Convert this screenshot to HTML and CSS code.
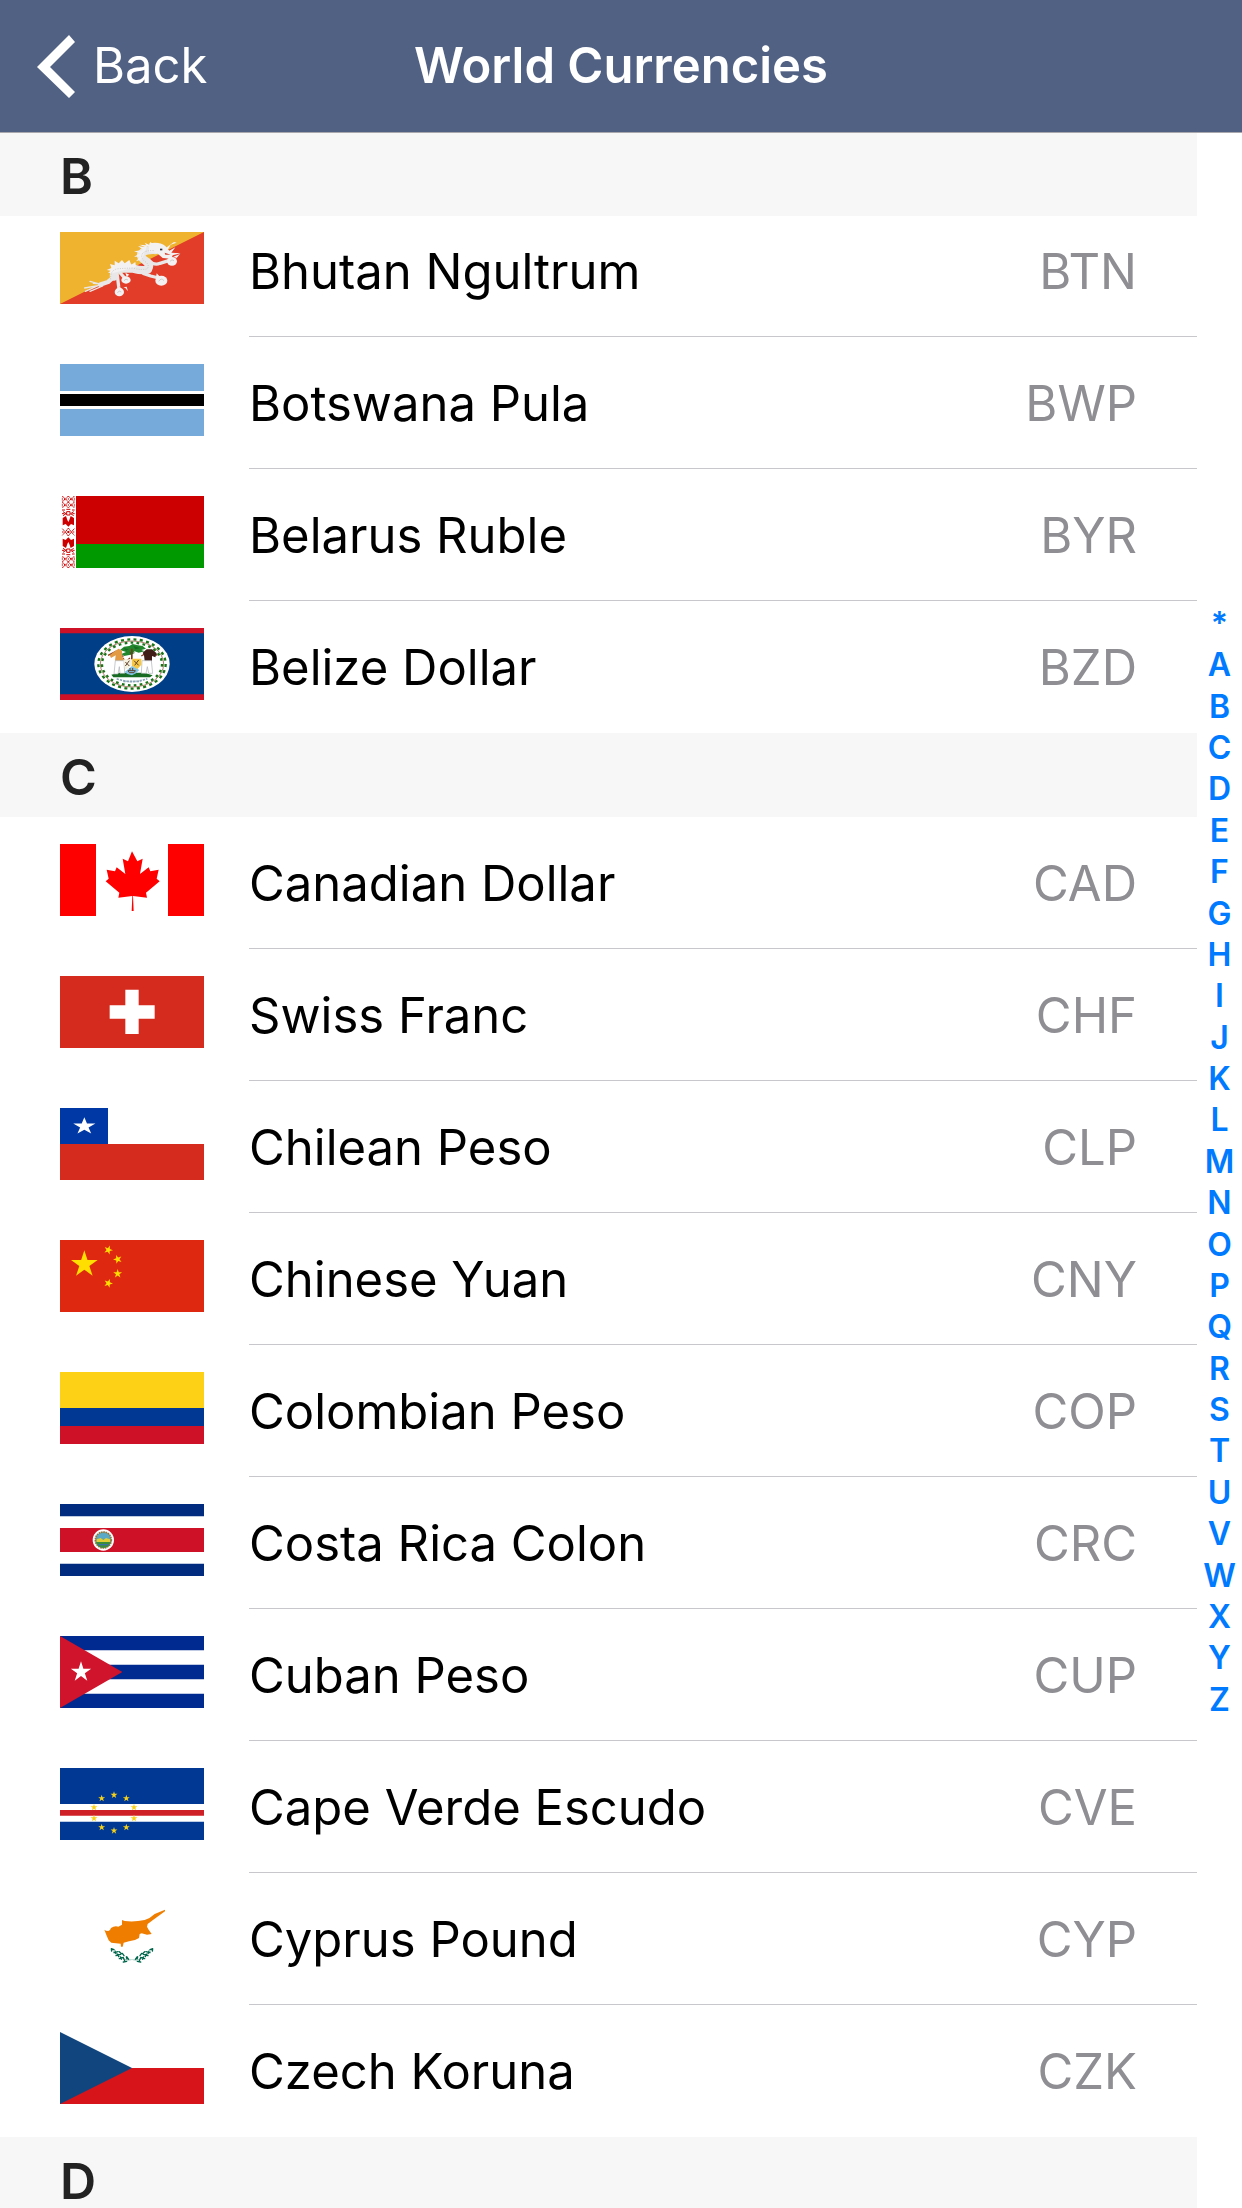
FILE: index.html
```html
<!DOCTYPE html>
<html lang="en">
<head>
<meta charset="utf-8">
<meta name="viewport" content="width=device-width, initial-scale=1">
<title>World Currencies</title>
<link rel="stylesheet" href="styles.css">
</head>
<body>
<svg class="defs" aria-hidden="true">
  <defs>
    <path id="star" d="M0-100 22.5-31H95L36 12 59 81 0 38-59 81-36 12-95-31H-22.5Z"/>
    <g id="diamonds" fill="none" stroke="#c00" stroke-width="3">
      <path d="M7 0l8 9-8 9 8 9-8 9M43 0l-8 9 8 9-8 9 8 9M25 0l-8 9 8 9-8 9 8 9M25 0l8 9-8 9 8 9-8 9" stroke-dasharray="5 1"/>
      <path d="M7 5v9M7 23v9M43 5v9M43 23v9M15 5v8M15 23v8M35 5v8M35 23v8M25 6v6M25 24v6" stroke-width="2"/>
      <path d="M6 42h9M19 40h12M36 42h8M9 47l9 6-9 6M41 47l-9 6 9 6M6 53h7M37 53h7M20 47h10v10h-10Z"/>
    </g>
    <g id="olive" fill="none" stroke="#00664b" stroke-width="4" stroke-linecap="round">
      <path d="M154 146l8 3M155 153l-1-5M162 158l12-3M168 161l-3-8M168 167l14-4M176 170l-3-8M178 176l12-4M184 178l-2-7M190 186l10-2M194 182l-4-9M201 177l-2-6M206 178l-6-8M184 161l-6-6M192 167l-5-7"/>
      <path d="M155 147q15 24 48 34l11-2" stroke-width="1"/>
    </g>
  </defs>
</svg>

<header class="navbar">
  <button class="back" type="button">
    <svg class="chevron" viewBox="0 0 38 63" aria-hidden="true"><path d="M32 0l6 7-25 25 25 25-6 6L0 32Z" fill="#fff"/></svg>
    <span>Back</span>
  </button>
  <h1 class="title">World Currencies</h1>
</header>

<main class="content">
  <div class="list">
    <section id="B">
      <h2 class="letter letter-pinned">B</h2>
      <ul class="rows rows-scrolled">
        <li class="row">
          <svg class="flag" viewBox="0 0 432 216" aria-hidden="true">
            <path fill="#efb32f" d="M0 0h432v216H0Z"/><path fill="#e23d28" d="M432 0v216H0Z"/>
            <g fill="none" stroke="#e9e7e7" stroke-linecap="round" stroke-linejoin="round">
              <path stroke-width="4" d="M76 178l40-18M74 168l44-8M90 178l38-16M90 148l36 10M100 154l28 2"/>
              <path stroke-width="13" d="M120 158l24-8 16-14"/>
              <path stroke-width="25" d="M162 134q-2-22 18-24l40 0q30 8 44 2 8-14-6-24-18-12-14-22 10-14 44-12"/>
              <path stroke-width="10" d="M172 130l4 34 2 12M178 120l16 18M250 124l22 8 24 6M266 84q16 18 34 10l26-8"/>
            </g>
            <g fill="#f3f1f1">
              <ellipse cx="178" cy="180" rx="14" ry="13"/><ellipse cx="198" cy="144" rx="14" ry="11"/>
              <ellipse cx="304" cy="146" rx="18" ry="15"/><ellipse cx="336" cy="88" rx="15" ry="13"/>
              <path d="M262 40l-24-2 18 8-22-4 16 12-28 4 18 6-18 10 18 0-12 14 18-6M158 124l-14-2 8-6-12-2 14-6-4-12 14 4 0-14 12 8 10-10 8 10 14-10 6 14 12-8 2 14"/>
              <path d="M268 34q30-6 48 8l12 14 18-10-12 16 28 2-24 6-4 10-26-2-16-14-26-4ZM320 46l22-16 8 2-18 6-10 18ZM260 42l-6-10 16 8 0-10 14 8 8-6 6 12M340 74l20-8-10 12M190 166l10-2 4 14-8-10ZM200 134l-4-12 12 6M288 136l2-12 10 10"/>
            </g>
            <g fill="none" stroke="#bcb8b8" stroke-width="2">
              <path d="M152 142q-2-28 22-32l44-2q28 8 44 2 8-12-8-22-14-12-6-24 10-10 34-8" stroke-dasharray="3 4"/>
              <path d="M172 182q6-8 12-2M192 146q6-8 12-2M296 148q8-12 16-2M330 88q6-8 12-2"/>
            </g>
            <path fill="#333" d="M300 50h7v5h-7Z"/><path fill="#d7402f" d="M314 62l18 6-16 0Z"/>
          </svg>
          <div class="cell"><span class="name">Bhutan Ngultrum</span><span class="code">BTN</span></div>
        </li>
        <li class="row">
          <svg class="flag" viewBox="0 0 432 216" aria-hidden="true">
            <path fill="#75aadb" d="M0 0h432v216H0Z"/><path fill="#fff" d="M0 81h432v54H0Z"/><path d="M0 90h432v36H0Z"/>
          </svg>
          <div class="cell"><span class="name">Botswana Pula</span><span class="code">BWP</span></div>
        </li>
        <li class="row">
          <svg class="flag" viewBox="0 0 432 216" aria-hidden="true">
            <path fill="#fff" d="M0 0h48v216H0Z"/><path fill="#c00" d="M48 0h384v144H48Z"/><path fill="#090" d="M48 144h384v72H48Z"/>
            <use href="#diamonds"/>
            <use href="#diamonds" transform="translate(0 216) scale(1 -1)"/>
            <path fill="none" stroke="#c00" stroke-width="3" stroke-dasharray="5 1" d="M7 98l9 10-9 10M43 98l-9 10 9 10M25 96l9 12-9 12-9-12ZM6 108h6M38 108h6"/>
            <path fill="#c00" d="M8 66l10-6 4 12 3 6 3-6 4-12 10 6v22l-9-4-8 8-8-8-9 4ZM8 150l10 6 4-12 3-6 3 6 4 12 10-6v-22l-9 4-8-8-8 8-9-4ZM22 105h6v6h-6Z"/>
          </svg>
          <div class="cell"><span class="name">Belarus Ruble</span><span class="code">BYR</span></div>
        </li>
        <li class="row">
          <svg class="flag" viewBox="0 0 432 216" aria-hidden="true">
            <path fill="#ce1126" d="M0 0h432v216H0Z"/><path fill="#003f87" d="M0 16h432v183H0Z"/>
            <ellipse cx="216" cy="108" rx="113" ry="84" fill="#fff"/>
            <g fill="none" stroke="#177517">
              <ellipse cx="216" cy="108" rx="95" ry="69" stroke-width="2" stroke="#8a3d22"/>
              <ellipse cx="216" cy="108" rx="101" ry="74" stroke-width="7" stroke-dasharray="9 10"/>
              <ellipse cx="216" cy="108" rx="90" ry="64" stroke-width="7" stroke-dasharray="8 10"/>
            </g>
            <path fill="#23852c" d="M180 66l12-10 16-2 10-6 16 4 14 2 10 8-14 4 10 4-18 4-12-4-12 10-20 4-8-6 14-6Z"/>
            <path fill="#176b22" d="M190 60l16 4-8 4ZM220 54l20 6-14 4ZM208 72l18 2-14 6ZM154 140l26-6h72l26 8-8 6h-110Z"/>
            <path fill="#753d18" d="M213 62h5v40h-5Z"/>
            <path fill="none" stroke="#8a3d22" stroke-width="4" d="M144 82l24-12 22 16M244 84l26-16 22 14M188 90l20 24M210 90l-24 20"/>
            <path fill="#e39b43" d="M166 68l10-6 10 6v14l6 16h-27l2-16-14 8-4-8Z"/>
            <path fill="#401d16" d="M248 74l12-10h16l14 12-4 12-10-4v14h-22l-2-16Z"/>
            <path fill="#fff" stroke="#aab0b4" stroke-width="2" d="M166 98h26l2 38h-14l-2-20-4 22h-12ZM246 98h28l4 38h-12l-4-20-4 20h-14Z"/>
            <path fill="#f7c843" d="M216 92h28v18l-12 14-16-10Z"/><path fill="#f5f1de" d="M190 94h26v18l-20 14Z"/>
            <path fill="#84c5e7" d="M194 132l22-18 22 12-10 10-12 6-14-4Z"/>
            <path fill="none" stroke="#60432e" stroke-width="3" d="M222 98l14 14M236 96l-12 16M196 102l12 12M208 98l-12 16M204 128h22l-4 6h-14ZM210 120v8M218 120v8"/>
            <path fill="none" stroke="#8ba5ba" stroke-width="5" stroke-dasharray="7 3" d="M170 152q46 18 92 0M190 160h52"/>
          </svg>
          <div class="cell"><span class="name">Belize Dollar</span><span class="code">BZD</span></div>
        </li>
      </ul>
    </section>

    <section id="C">
      <h2 class="letter">C</h2>
      <ul class="rows">
        <li class="row">
          <svg class="flag" viewBox="0 0 432 216" aria-hidden="true">
            <path fill="#fff" d="M0 0h432v216H0Z"/>
            <path fill="red" d="M0 0h108v216H0ZM324 0h108v216H324ZM216 22l16 30 16-8-8 46 26-20 5 12 25-5-6 27 9 8-41 34 3 15-42-5 2 45h-6l2-45-42 5 3-15-41-34 9-8-6-27 25 5 5-12 26 20-8-46 16 8Z"/>
          </svg>
          <div class="cell"><span class="name">Canadian Dollar</span><span class="code">CAD</span></div>
        </li>
        <li class="row">
          <svg class="flag" viewBox="0 0 432 216" aria-hidden="true">
            <path fill="#d52b1e" d="M0 0h432v216H0Z"/><path fill="#fff" d="M196 41h40v47h48v40h-48v46h-40v-46h-47V88h47Z"/>
          </svg>
          <div class="cell"><span class="name">Swiss Franc</span><span class="code">CHF</span></div>
        </li>
        <li class="row">
          <svg class="flag" viewBox="0 0 432 216" aria-hidden="true">
            <path fill="#fff" d="M0 0h432v216H0Z"/><path fill="#d52b1e" d="M0 108h432v108H0Z"/><path fill="#0039a6" d="M0 0h144v108H0Z"/>
            <use href="#star" fill="#fff" transform="translate(73 55) scale(.35 .27)"/>
          </svg>
          <div class="cell"><span class="name">Chilean Peso</span><span class="code">CLP</span></div>
        </li>
        <li class="row">
          <svg class="flag" viewBox="0 0 432 216" aria-hidden="true">
            <path fill="#de2910" d="M0 0h432v216H0Z"/>
            <g fill="#ffde00">
              <use href="#star" transform="translate(73 73) scale(.42)"/>
              <use href="#star" transform="translate(145 30) rotate(20) scale(.14)"/>
              <use href="#star" transform="translate(173 58) rotate(-20) scale(.14)"/>
              <use href="#star" transform="translate(173 101) scale(.14)"/>
              <use href="#star" transform="translate(145 130) rotate(20) scale(.14)"/>
            </g>
          </svg>
          <div class="cell"><span class="name">Chinese Yuan</span><span class="code">CNY</span></div>
        </li>
        <li class="row">
          <svg class="flag" viewBox="0 0 432 216" aria-hidden="true">
            <path fill="#fcd116" d="M0 0h432v108H0Z"/><path fill="#003893" d="M0 108h432v54H0Z"/><path fill="#ce1126" d="M0 162h432v54H0Z"/>
          </svg>
          <div class="cell"><span class="name">Colombian Peso</span><span class="code">COP</span></div>
        </li>
        <li class="row">
          <svg class="flag" viewBox="0 0 432 216" aria-hidden="true">
            <path fill="#002b7f" d="M0 0h432v216H0Z"/><path fill="#fff" d="M0 37h432v142H0Z"/><path fill="#ce1126" d="M0 72h432v72H0Z"/>
            <circle cx="130" cy="108" r="32" fill="#fff"/>
            <circle cx="130" cy="108" r="24" fill="#6fa28d" stroke="#92743e" stroke-width="5" stroke-dasharray="5 2"/>
            <path fill="#5aa9c7" d="M112 94q18-14 36 0v10h-36Z"/><path fill="#e2cf38" d="M110 106l12-4 8 6 8-6 12 4v8h-40Z"/><path fill="#3b8d3c" d="M108 114h44q-4 16-22 18-18-2-22-18Z"/><path fill="#3a6fa5" d="M114 120h32v4h-32Z"/>
          </svg>
          <div class="cell"><span class="name">Costa Rica Colon</span><span class="code">CRC</span></div>
        </li>
        <li class="row">
          <svg class="flag" viewBox="0 0 432 216" aria-hidden="true">
            <path fill="#002a8f" d="M0 0h432v216H0Z"/><path fill="#fff" d="M0 43h432v43H0ZM0 130h432v43H0Z"/><path fill="#cf142b" d="M0 0l187 108L0 216Z"/>
            <use href="#star" fill="#fff" transform="translate(63 108) scale(.32)"/>
          </svg>
          <div class="cell"><span class="name">Cuban Peso</span><span class="code">CUP</span></div>
        </li>
        <li class="row">
          <svg class="flag" viewBox="0 0 432 216" aria-hidden="true">
            <path fill="#003893" d="M0 0h432v216H0Z"/><path fill="#fff" d="M0 108h432v53H0Z"/><path fill="#cf2027" d="M0 126h432v17H0Z"/>
            <g fill="#f7d116">
              <use href="#star" transform="translate(162 81) scale(.11)"/><use href="#star" transform="translate(199 91) scale(.11)"/>
              <use href="#star" transform="translate(222 118) scale(.11)"/><use href="#star" transform="translate(222 151) scale(.11)"/>
              <use href="#star" transform="translate(199 178) scale(.11)"/><use href="#star" transform="translate(162 188) scale(.11)"/>
              <use href="#star" transform="translate(125 178) scale(.11)"/><use href="#star" transform="translate(102 151) scale(.11)"/>
              <use href="#star" transform="translate(102 118) scale(.11)"/><use href="#star" transform="translate(125 91) scale(.11)"/>
            </g>
          </svg>
          <div class="cell"><span class="name">Cape Verde Escudo</span><span class="code">CVE</span></div>
        </li>
        <li class="row">
          <svg class="flag" viewBox="0 0 432 216" aria-hidden="true">
            <path fill="#fff" d="M0 0h432v216H0Z"/>
            <path fill="#ef7d00" d="M133 89l5 3 7 1q6-2 8-9 10-7 22-4l11-6V60l8 3q28 4 60-3 18-6 30-18l31-13v5l-33 24-19 14-2 8 4 8 10 14-14 2-16-4-6 2-2 12-12 6-18 4-16 4-3 12h-5l-1-9-14-1-14-2-8-7-6-14Z"/>
            <use href="#olive"/><use href="#olive" transform="translate(432 0) scale(-1 1)"/>
          </svg>
          <div class="cell"><span class="name">Cyprus Pound</span><span class="code">CYP</span></div>
        </li>
        <li class="row">
          <svg class="flag" viewBox="0 0 432 216" aria-hidden="true">
            <path fill="#fff" d="M0 0h432v216H0Z"/><path fill="#d7141a" d="M0 108h432v108H0Z"/><path fill="#11457e" d="M0 0l216 108L0 216Z"/>
          </svg>
          <div class="cell"><span class="name">Czech Koruna</span><span class="code">CZK</span></div>
        </li>
      </ul>
    </section>

    <section id="D">
      <h2 class="letter">D</h2>
    </section>
  </div>

  <nav class="index" aria-label="Section index">
    <a href="#top">*</a><a href="#A">A</a><a href="#B">B</a><a href="#C">C</a><a href="#D">D</a><a href="#E">E</a><a href="#F">F</a><a href="#G">G</a><a href="#H">H</a><a href="#I">I</a><a href="#J">J</a><a href="#K">K</a><a href="#L">L</a><a href="#M">M</a><a href="#N">N</a><a href="#O">O</a><a href="#P">P</a><a href="#Q">Q</a><a href="#R">R</a><a href="#S">S</a><a href="#T">T</a><a href="#U">U</a><a href="#V">V</a><a href="#W">W</a><a href="#X">X</a><a href="#Y">Y</a><a href="#Z">Z</a>
  </nav>
</main>
</body>
</html>
```
FILE: styles.css
```css
* {
  box-sizing: border-box;
}

body {
  margin: 0;
  height: 100vh;
  display: flex;
  flex-direction: column;
  overflow: hidden;
  background: #fff;
  color: #000;
  font-family: Inter, "Liberation Sans", sans-serif;
  font-size: 49px;
  line-height: 60px;
}

.defs {
  position: absolute;
  width: 0;
  height: 0;
}

.navbar {
  flex: none;
  display: grid;
  grid-template-columns: 1fr auto 1fr;
  align-items: center;
  height: 133px;
  padding: 0 37px;
  background: #516183;
  border-bottom: 1px solid #a8a8ad;
  color: #fff;
}

.back {
  justify-self: start;
  display: flex;
  align-items: center;
  gap: 18px;
  padding: 0;
  border: 0;
  background: none;
  color: inherit;
  font: inherit;
}

.chevron {
  width: 38px;
  height: 63px;
}

.title {
  margin: 0;
  font-size: 49px;
  font-weight: 600;
}

.content {
  flex: 1;
  min-height: 0;
  display: flex;
}

.list {
  flex: 1;
  overflow-y: auto;
  scrollbar-width: none;
}

.letter {
  margin: 0;
  padding: 14px 60px 10px;
  background: #f7f7f7;
  color: #222;
  font-size: 50px;
  font-weight: 600;
}

/* The first heading stays pinned over rows that scroll beneath it. */
.letter-pinned {
  position: sticky;
  top: 0;
  padding-top: 13px;
}

.rows {
  margin: 0;
  padding: 0;
  list-style: none;
}

.rows-scrolled {
  margin-top: -11px;
}

.row {
  display: flex;
  gap: 45px;
  height: 132px;
  padding-left: 60px;
}

.flag {
  flex: none;
  width: 144px;
  height: 72px;
  margin-top: 27px;
}

.cell {
  flex: 1;
  display: flex;
  align-items: center;
  justify-content: space-between;
  padding-top: 2px;
  padding-right: 60px;
  border-bottom: 1px solid #c8c7cc;
}

.row:last-child .cell {
  border-bottom-color: transparent;
}

.code {
  color: #8e8e93;
}

.index {
  flex: none;
  display: grid;
  grid-auto-rows: 1fr;
  width: 45px;
  height: 1117px;
  margin-top: 470px;
  text-align: center;
  font-size: 32px;
  font-weight: 600;
  line-height: 41px;
}

.index a {
  color: #007aff;
  text-decoration: none;
}
```
